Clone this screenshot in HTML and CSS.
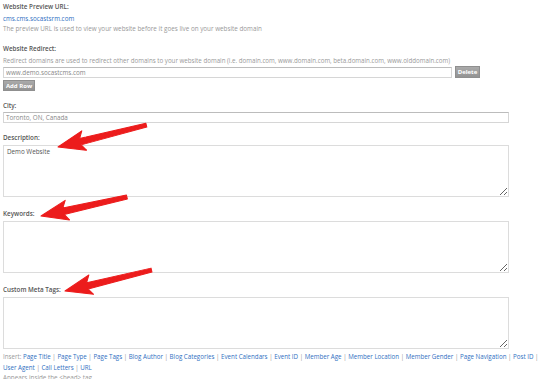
FILE: index.html
```html
<!DOCTYPE html>
<html lang="en">
<head>
    <meta charset="UTF-8">
    <meta name="viewport" content="width=device-width, initial-scale=1.0">
    <title>Website Settings</title>
    <link rel="stylesheet" href="styles.css">
</head>
<body>
    <div class="page">
        <!-- Preview URL -->
        <div class="field">
            <div class="label">Website Preview URL:</div>
            <a class="preview-link" href="#">cms.cms.socastsrm.com</a>
            <p class="help">The preview URL is used to view your website before it goes live on your website domain</p>
        </div>

        <!-- Redirects -->
        <div class="field">
            <div class="label">Website Redirect:</div>
            <p class="help help-tight">Redirect domains are used to redirect other domains to your website domain (i.e. domain.com, www.domain.com, beta.domain.com, www.olddomain.com)</p>
            <div class="redirect-row">
                <input class="text-input redirect-input" type="text" value="www.demo.socastcms.com">
                <button class="btn btn-delete">Delete</button>
            </div>
            <button class="btn btn-add">Add Row</button>
        </div>

        <div class="field">
            <div class="label">City:</div>
            <input class="text-input wide-input" type="text" value="Toronto, ON, Canada">
        </div>

        <div class="field">
            <div class="label">Description:</div>
            <textarea class="text-area">Demo Website</textarea>
        </div>

        <div class="field field-area">
            <div class="label">Keywords:</div>
            <textarea class="text-area"></textarea>
        </div>

        <div class="field field-area">
            <div class="label">Custom Meta Tags:</div>
            <textarea class="text-area"></textarea>
            <p class="insert-links">
                Insert: <a href="#">Page Title</a> | <a href="#">Page Type</a> | <a href="#">Page Tags</a> | <a href="#">Blog Author</a> | <a href="#">Blog Categories</a> | <a href="#">Event Calendars</a> | <a href="#">Event ID</a> | <a href="#">Member Age</a> | <a href="#">Member Location</a> | <a href="#">Member Gender</a> | <a href="#">Page Navigation</a> | <a href="#">Post ID</a> |<br>
                <a href="#">User Agent</a> | <a href="#">Call Letters</a> | <a href="#">URL</a>
            </p>
            <p class="help help-last">Appears inside the &lt;head&gt; tag</p>
        </div>
    </div>

    <!-- Annotation arrows -->
    <svg class="arrows" width="541" height="379" viewBox="0 0 541 379">
        <g transform="translate(58 147) rotate(-13.9)">
            <polygon class="arrow" points="0,0 27,-10 23,-3 91,-2 91,2 23,3.5 27,10"/>
        </g>
        <g transform="translate(41 216) rotate(-12.5)">
            <polygon class="arrow" points="0,0 27,-10 23,-3 88,-2 88,2 23,3.5 27,10"/>
        </g>
        <g transform="translate(65 291) rotate(-13.6)">
            <polygon class="arrow" points="0,0 27,-10 23,-3 89,-2 89,2 23,3.5 27,10"/>
        </g>
    </svg>
</body>
</html>
```

FILE: styles.css
```css
body {
    margin: 0;
    background: #fff;
    font-family: "Open Sans", Arial, sans-serif;
    font-size: 6.3px;
    color: #555;
    overflow: hidden;
}

.page {
    padding: 2px 3px 0;
}

.field {
    margin-top: 10px;
}

.field:first-child {
    margin-top: 0;
}

.field-area {
    margin-top: 12px;
}

.label {
    font-weight: 600;
    line-height: 10px;
    color: #555;
}

.preview-link {
    display: block;
    margin-top: 2px;
    line-height: 10px;
    color: #2f6fc2;
    text-decoration: none;
}

.help {
    margin: 0;
    line-height: 10px;
    color: #999;
}

.help-tight {
    margin-top: 2px;
    font-size: 6.2px;
}

.help-last {
    line-height: 9px;
}

/* Inputs */
.text-input {
    box-sizing: border-box;
    height: 11px;
    margin: 0;
    padding: 0 2px;
    border: 1px solid #d6d6d6;
    border-top-color: #bcbcbc;
    font-family: inherit;
    font-size: 6.3px;
    color: #888;
    background: #fff;
}

.redirect-row {
    display: flex;
    align-items: center;
    gap: 3px;
    height: 12px;
}

.redirect-input {
    width: 449px;
}

.wide-input {
    display: block;
    width: 506px;
    margin-top: 1px;
}

.btn {
    box-sizing: border-box;
    margin: 0;
    padding: 0;
    border: 1px solid #8f8f8f;
    background: linear-gradient(#aaa, #939393);
    color: #fff;
    font-family: inherit;
    font-size: 6px;
    font-weight: 700;
    line-height: 1;
    white-space: nowrap;
    text-align: center;
    cursor: pointer;
}

.btn-delete {
    width: 25px;
    height: 12px;
}

.btn-add {
    display: block;
    width: 32px;
    height: 11px;
    margin-top: 2px;
}

.text-area {
    display: block;
    box-sizing: border-box;
    width: 506px;
    height: 52px;
    margin: 2px 0 0;
    padding: 1px 3px;
    border: 1px solid #dcdcdc;
    font-family: inherit;
    font-size: 6.3px;
    color: #555;
    resize: vertical;
}

.insert-links {
    margin: 3px 0 0;
    line-height: 10.5px;
    font-size: 6.2px;
    color: #999;
    white-space: nowrap;
}

.insert-links a {
    color: #2f6fc2;
    text-decoration: none;
}

/* Red annotation arrows */
.arrows {
    position: absolute;
    top: 0;
    left: 0;
    pointer-events: none;
}

.arrow {
    fill: #ec1c1c;
    stroke: #ec1c1c;
    stroke-width: 1;
    stroke-linejoin: round;
}
```
